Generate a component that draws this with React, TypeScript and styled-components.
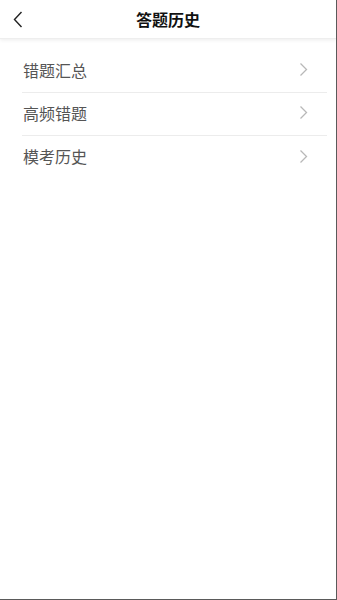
import React from "react";
import styled, { createGlobalStyle } from "styled-components";

const GlobalStyle = createGlobalStyle`
  html, body {
    margin: 0;
    padding: 0;
    background: #ffffff;
  }
  * {
    box-sizing: border-box;
  }
`;

const Page = styled.div`
  position: relative;
  width: 337px;
  height: 600px;
  background: #ffffff;
  border-right: 1px solid #5a5a5a;
  border-bottom: 1px solid #5a5a5a;
  font-family: "Noto Sans CJK SC", "Noto Sans", sans-serif;
  overflow: hidden;
`;

const ScrollHint = styled.div`
  position: absolute;
  right: -1px;
  top: 165px;
  width: 1px;
  height: 50px;
  background: #b5b5b5;
`;

const Header = styled.header`
  height: 39px;
  display: flex;
  align-items: center;
  justify-content: center;
  position: relative;
  box-shadow: 0 1px 4px rgba(0, 0, 0, 0.08);
  border-bottom: 1px solid #eeeeee;
`;

const BackButton = styled.button`
  position: absolute;
  left: 8px;
  top: 8px;
  width: 20px;
  height: 22px;
  border: none;
  background: none;
  padding: 0;
  display: flex;
  align-items: center;
  justify-content: center;
`;

const Title = styled.h1`
  margin: 0;
  font-size: 16px;
  font-weight: 700;
  color: #111111;
  letter-spacing: 0;
`;

const List = styled.ul`
  list-style: none;
  margin: 0;
  padding: 11px 9px 0 22px;
`;

const Row = styled.li<{ $last?: boolean }>`
  height: 43px;
  display: flex;
  align-items: center;
  justify-content: space-between;
  padding: 0 19px 3px 1px;
  border-bottom: ${(p) => (p.$last ? "none" : "1px solid #ececec")};
`;

const Label = styled.span`
  font-size: 16px;
  color: #555555;
`;

const Chevron = () => (
  <svg width="9" height="15" viewBox="0 0 9 15">
    <polyline
      points="1.5,1.5 7.5,7.5 1.5,13.5"
      fill="none"
      stroke="#b8b8b8"
      strokeWidth="1.3"
    />
  </svg>
);

const items = ["错题汇总", "高频错题", "模考历史"];

const App: React.FC = () => {
  return (
    <>
      <GlobalStyle />
      <Page>
        <Header>
          <BackButton aria-label="返回">
            <svg width="10" height="17" viewBox="0 0 10 17">
              <polyline
                points="8.5,1 1.5,8.5 8.5,16"
                fill="none"
                stroke="#222222"
                strokeWidth="1.4"
              />
            </svg>
          </BackButton>
          <Title>答题历史</Title>
        </Header>
        <List>
          {items.map((item, i) => (
            <Row key={item} $last={i === items.length - 1}>
              <Label>{item}</Label>
              <Chevron />
            </Row>
          ))}
        </List>
        <ScrollHint />
      </Page>
    </>
  );
};

export default App;
